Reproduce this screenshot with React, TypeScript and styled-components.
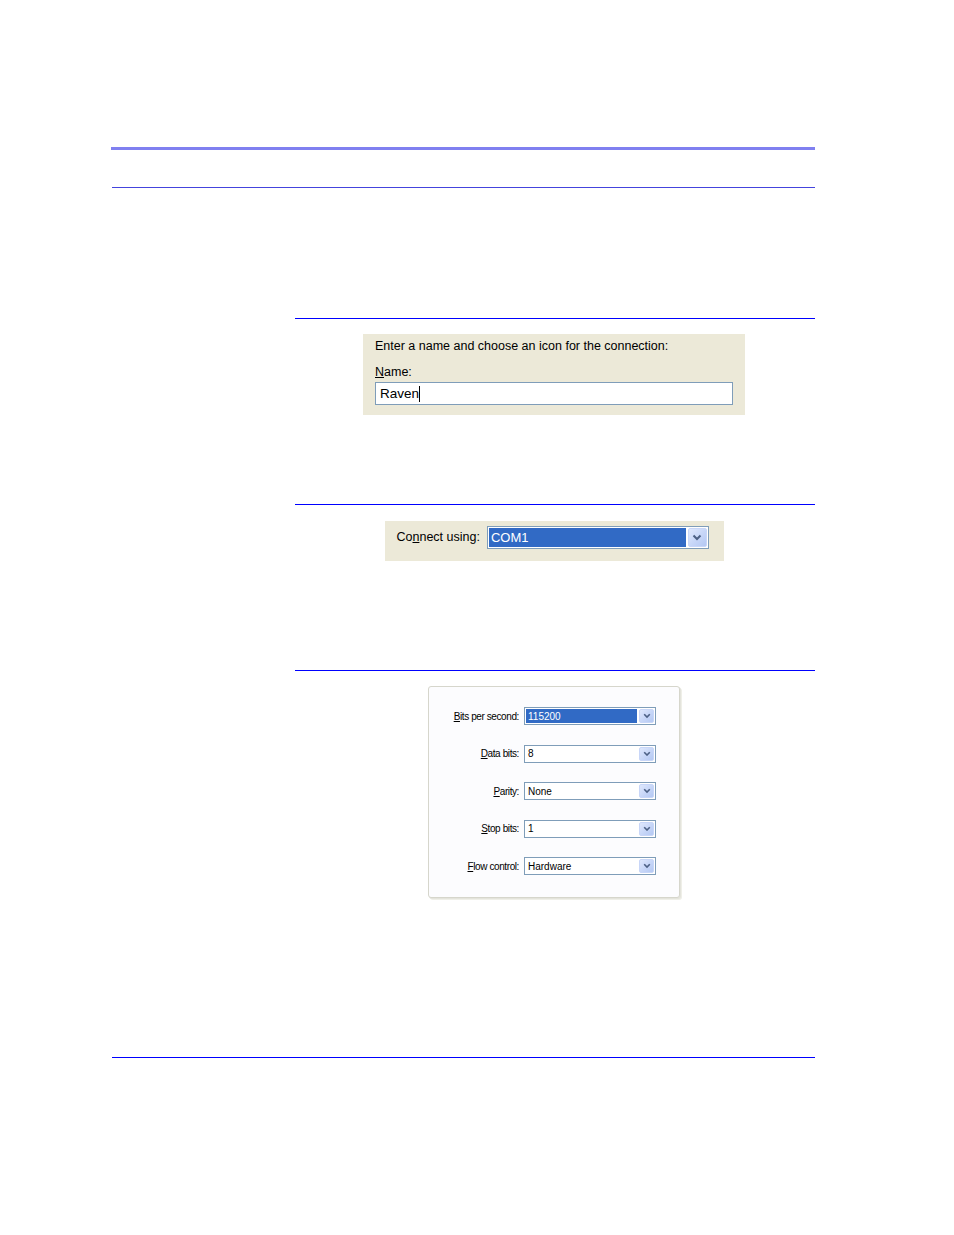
import React from 'react';
import styled, { createGlobalStyle } from 'styled-components';

const GlobalStyle = createGlobalStyle`
  html, body {
    margin: 0;
    padding: 0;
    background: #ffffff;
  }
  body {
    font-family: "Liberation Sans", Arial, sans-serif;
    color: #000000;
  }
`;

const Page = styled.div`
  width: 954px;
  height: 1235px;
  padding-top: 147px;
  box-sizing: border-box;
  display: flex;
  flex-direction: column;
`;

const TopRule = styled.div`
  margin-left: 111px;
  width: 704px;
  height: 3px;
  background: #8080f0;
`;

const SubRule = styled.div<{ $top: number; $tone: string }>`
  margin-left: 112px;
  margin-top: ${({ $top }) => $top}px;
  width: 703px;
  height: 1px;
  background: ${({ $tone }) => $tone};
`;

const Section = styled.section<{ $top: number }>`
  margin-left: 295px;
  margin-top: ${({ $top }) => $top}px;
  width: 520px;
  display: flex;
  flex-direction: column;
  align-items: center;
`;

const SectionRule = styled.div<{ $gap: number }>`
  align-self: stretch;
  height: 1px;
  background: #0000ff;
  margin-bottom: ${({ $gap }) => $gap}px;
`;

const XpPanel = styled.div<{ $w: number; $h: number }>`
  width: ${({ $w }) => $w}px;
  height: ${({ $h }) => $h}px;
  margin-right: 2px;
  background: #ece9d8;
  box-sizing: border-box;
  font-family: "Liberation Sans", Arial, sans-serif;
`;

const NamePanel = styled(XpPanel)`
  padding: 5px 12px 0 12px;
  display: flex;
  flex-direction: column;
`;

const PanelText = styled.div<{ $size?: number }>`
  font-size: ${({ $size }) => $size ?? 12.5}px;
  line-height: 15px;
  color: #000;
  white-space: nowrap;
`;

const NameLabel = styled(PanelText)`
  margin-top: 11px;
`;

const TextInput = styled.div`
  margin-top: 2px;
  height: 23px;
  width: 358px;
  box-sizing: border-box;
  border: 1px solid #7f9db9;
  background: #fff;
  display: flex;
  align-items: center;
  padding-left: 4px;
  font-size: 13.5px;
  color: #000;
`;

const Caret = styled.span`
  display: inline-block;
  width: 1px;
  height: 16px;
  background: #000;
`;

const ConnectPanel = styled(XpPanel)`
  padding: 5px 14px 0 12px;
  display: flex;
  align-items: center;
  align-self: center;
  gap: 7px;
  align-items: flex-start;

  & > ${PanelText} {
    margin-top: 4px;
  }
`;

const Combo = styled.div<{ $w: number; $h: number }>`
  flex: none;
  width: ${({ $w }) => $w}px;
  height: ${({ $h }) => $h}px;
  box-sizing: border-box;
  border: 1px solid #7f9db9;
  background: #fff;
  display: flex;
  align-items: stretch;
  padding: 1px;
  gap: 2px;
`;

const ComboValue = styled.div<{ $selected?: boolean; $size: number }>`
  flex: 1;
  display: flex;
  align-items: center;
  padding-left: 2px;
  font-size: ${({ $size }) => $size}px;
  background: ${({ $selected }) => ($selected ? '#316ac5' : 'transparent')};
  color: ${({ $selected }) => ($selected ? '#ffffff' : '#000000')};
`;

const DropButton = styled.div<{ $w: number }>`
  width: ${({ $w }) => $w}px;
  display: flex;
  align-items: center;
  justify-content: center;
  border-radius: 2px;
  background: linear-gradient(135deg, #dfe8fd 0%, #c4d4f7 60%, #b4c8f3 100%);
  border: 1px solid #c8d6f8;
  box-sizing: border-box;
`;

const Chevron = ({ size }: { size: number }) => (
  <svg width={size} height={size * 0.7} viewBox="0 0 10 7">
    <polyline points="1.5,1.5 5,5 8.5,1.5" fill="none" stroke="#4d6185" strokeWidth="2" />
  </svg>
);

const PortPanel = styled.div`
  width: 252px;
  height: 212px;
  margin-right: 2px;
  box-sizing: border-box;
  background: #fcfcfe;
  border: 1px solid #d6d6cc;
  border-radius: 3px;
  box-shadow: 1px 1px 0 #e4e4dc, 2px 2px 0 #efefe8;
  padding: 20px 23px 0 0;
  display: grid;
  grid-template-columns: 90px 132px;
  grid-auto-rows: 18px;
  row-gap: 19.5px;
  column-gap: 5px;
  align-content: start;
  font-family: "Liberation Sans", Arial, sans-serif;
`;

const PortLabel = styled.div`
  font-size: 10px;
  letter-spacing: -0.4px;
  color: #000;
  text-align: right;
  align-self: center;
  white-space: nowrap;
`;

const Key = styled.span`
  text-decoration: underline;
  text-underline-offset: 1px;
`;

const portRows: { key: string; rest: string; value: string; selected?: boolean }[] = [
  { key: 'B', rest: 'its per second:', value: '115200', selected: true },
  { key: 'D', rest: 'ata bits:', value: '8' },
  { key: 'P', rest: 'arity:', value: 'None' },
  { key: 'S', rest: 'top bits:', value: '1' },
  { key: 'F', rest: 'low control:', value: 'Hardware' },
];

export default function App() {
  return (
    <>
      <GlobalStyle />
      <Page>
        <TopRule />
        <SubRule $top={37} $tone="#4444dd" />

        <Section $top={130}>
          <SectionRule $gap={15} />
          <NamePanel $w={382} $h={81}>
            <PanelText>Enter a name and choose an icon for the connection:</PanelText>
            <NameLabel>
              <Key>N</Key>ame:
            </NameLabel>
            <TextInput>
              Raven
              <Caret />
            </TextInput>
          </NamePanel>
        </Section>

        <Section $top={89}>
          <SectionRule $gap={16} />
          <ConnectPanel $w={339} $h={40}>
            <PanelText $size={12.5}>
              Co<Key>n</Key>nect using:
            </PanelText>
            <Combo $w={222} $h={23}>
              <ComboValue $selected $size={13}>COM1</ComboValue>
              <DropButton $w={19}>
                <Chevron size={10} />
              </DropButton>
            </Combo>
          </ConnectPanel>
        </Section>

        <Section $top={109}>
          <SectionRule $gap={15} />
          <PortPanel>
            {portRows.map((row) => (
              <React.Fragment key={row.key}>
                <PortLabel>
                  <Key>{row.key}</Key>
                  {row.rest}
                </PortLabel>
                <Combo $w={132} $h={18}>
                  <ComboValue $selected={row.selected} $size={10}>
                    {row.value}
                  </ComboValue>
                  <DropButton $w={15}>
                    <Chevron size={8} />
                  </DropButton>
                </Combo>
              </React.Fragment>
            ))}
          </PortPanel>
        </Section>

        <SubRule $top={159} $tone="#0000ff" />
      </Page>
    </>
  );
}
